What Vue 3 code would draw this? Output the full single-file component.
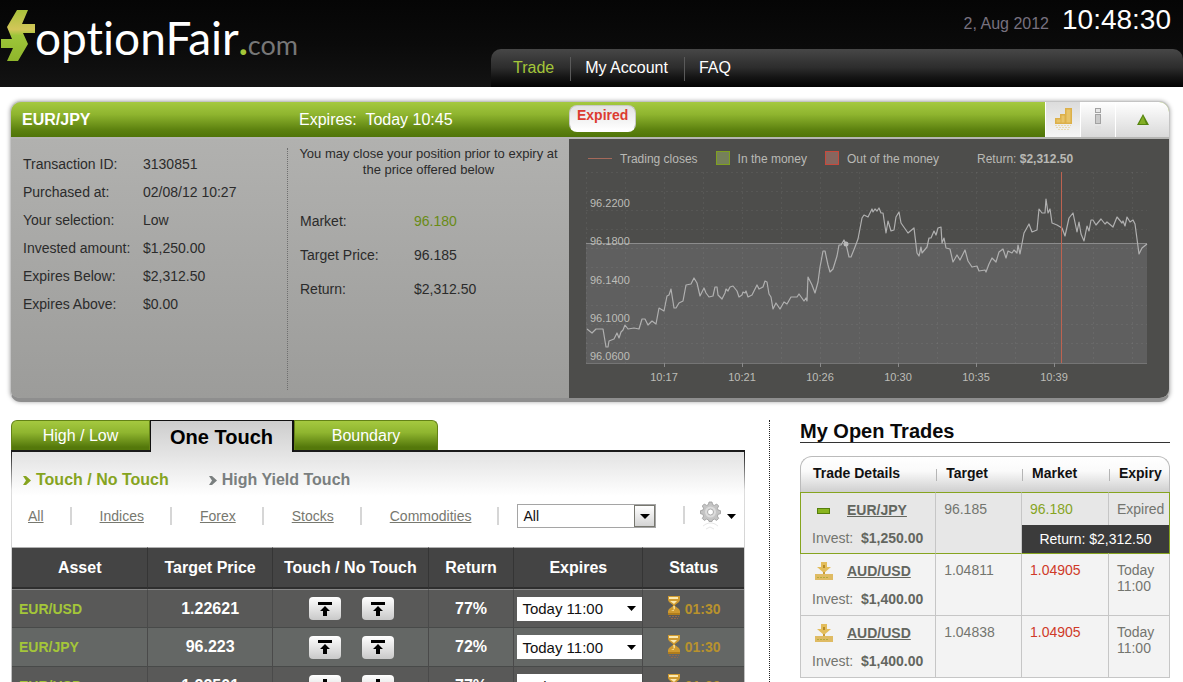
<template>
  <div class="page">
    <header class="top">
      <a class="logo" href="#" aria-label="optionFair.com">
        <svg class="logo-mark" viewBox="0 0 35 53" aria-hidden="true">
          <defs>
            <linearGradient id="markFill" x1="0" y1="0" x2="0" y2="1">
              <stop offset="0" stop-color="#a9c23c" />
              <stop offset="0.38" stop-color="#d3c659" />
              <stop offset="0.5" stop-color="#9dc63a" />
              <stop offset="1" stop-color="#8fb52b" />
            </linearGradient>
          </defs>
          <path d="M17 1H28L22 15H35V24H23L28 35L18 52H7L13 39H1V30H12L7 18Z" fill="url(#markFill)" />
        </svg>
        <span class="logo-name">optionFair</span><span class="logo-dot">.</span><span class="logo-com">com</span>
      </a>
      <div class="top-right">
        <div class="clock">
          <span class="date">2, Aug 2012</span>
          <span class="time">10:48:30</span>
        </div>
        <nav class="menu">
          <a v-for="item in menu" :key="item" href="#" :class="{ active: item === 'Trade' }">{{ item }}</a>
        </nav>
      </div>
    </header>

    <section class="position">
      <div class="position-head">
        <h2>EUR/JPY</h2>
        <p>Expires:&nbsp; Today 10:45</p>
        <div class="position-state">
          <span class="badge">Expired</span>
          <div class="tools">
            <button class="tool pressed" type="button" aria-label="Chart">
              <svg width="18" height="24" viewBox="0 0 18 24">
                <path d="M1 10h5V6h5V0h7v16H1z" fill="#dcb04a" />
                <path d="M2.500 11.500h4v3h-4zM7.500 7.500h3v7h-3zM12.500 1.500h4v13h-4z" fill="#e8c468" />
                <path d="M1 17.500h16M2 19.500h14M4 21.500h11" stroke="#e8dbb0" stroke-dasharray="2 1" />
              </svg>
            </button>
            <button class="tool" type="button" aria-label="Info">
              <svg width="8" height="24" viewBox="0 0 8 24">
                <rect x="1.500" y="0.500" width="5" height="4" fill="#e6e6e6" stroke="#a2a2a2" />
                <rect x="1.500" y="6.500" width="5" height="9" fill="#cacaca" stroke="#a2a2a2" />
                <path d="M1 18h6v5H1z" fill="#e0e0e0" />
              </svg>
            </button>
            <button class="tool wide" type="button" aria-label="Collapse">
              <svg width="12" height="11" viewBox="0 0 12 11"><path d="M6 0l6 11H0z" fill="#55840f" /><path d="M6 2l3 8H2z" fill="#83ae25" /></svg>
            </button>
          </div>
        </div>
      </div>

      <div class="position-body">
        <dl class="details">
          <template v-for="row in details" :key="row[0]">
            <dt>{{ row[0] }}</dt>
            <dd>{{ row[1] }}</dd>
          </template>
        </dl>
        <div class="offer">
          <p>You may close your position prior to expiry at the price offered below</p>
          <dl>
            <dt>Market:</dt>
            <dd class="green">96.180</dd>
            <dt>Target Price:</dt>
            <dd>96.185</dd>
            <dt>Return:</dt>
            <dd>$2,312.50</dd>
          </dl>
        </div>
        <div class="chart">
          <div class="legend">
            <span class="key"><i class="line"></i>Trading closes</span>
            <span class="key"><i class="box in"></i>In the money</span>
            <span class="key"><i class="box out"></i>Out of the money</span>
            <span class="payout">Return: <b>$2,312.50</b></span>
          </div>
          <svg class="plot" viewBox="0 0 600 231" role="img" aria-label="EUR/JPY price">
            <g transform="translate(17 5)">
              <rect x="0" y="71" width="561" height="120" fill="#5f5f5f" />
              <path :d="grid" stroke="#fff" stroke-opacity="0.06" stroke-dasharray="2 3" fill="none" />
              <path d="M0 71.500H561" stroke="#8c8c8c" />
              <path d="M0 191.500H561" stroke="#757575" />
              <path v-for="t in times" :key="t.x" :d="`M${t.x + 0.5} 191v4`" stroke="#8a8a8a" />
              <polyline :points="prices" fill="none" stroke="#b0b0b0" stroke-width="1.200" stroke-linejoin="round" />
              <rect x="475" y="0" width="1" height="191" fill="#bd6350" />
              <circle cx="260" cy="72" r="2.500" fill="#b8b8b8" />
              <text v-for="p in levels" :key="p.y" x="4" :y="p.y">{{ p.label }}</text>
              <text v-for="t in times" :key="t.label" :x="t.x" y="209" text-anchor="middle">{{ t.label }}</text>
            </g>
          </svg>
        </div>
      </div>
    </section>

    <main class="columns">
      <section class="market">
        <div class="tabs">
          <button type="button">High / Low</button>
          <button type="button" class="current">One Touch</button>
          <button type="button">Boundary</button>
        </div>
        <div class="market-panel">
          <div class="modes">
            <a href="#" class="current"><svg width="8" height="9" viewBox="0 0 8 9"><path d="M0 0h3l5 4.500L3 9H0l3-4.500z" fill="currentColor" /></svg>Touch / No Touch</a>
            <a href="#"><svg width="8" height="9" viewBox="0 0 8 9"><path d="M0 0h3l5 4.500L3 9H0l3-4.500z" fill="currentColor" /></svg>High Yield Touch</a>
          </div>
          <div class="filters">
            <a v-for="f in filters" :key="f" href="#">{{ f }}</a>
            <div class="select asset-select">
              <select aria-label="Asset">
                <option>All</option>
              </select>
              <span class="drop"><svg width="10" height="5" viewBox="0 0 10 5"><path d="M0 0h10L5 5z" /></svg></span>
            </div>
            <button class="settings" type="button" aria-label="Settings">
              <svg width="21" height="30" viewBox="0 0 21 30">
                <g fill="#c4c4c4" stroke="#9b9b9b" stroke-width="0.800">
                  <path d="M9 1h3l.6 2.600 1.800.8L16.700 3l2 2-1.300 2.300.8 1.800 2.300.6v3l-2.300.6-.8 1.800 1.300 2.300-2 2-2.300-1.300-1.800.8L12 20.500H9l-.6-1.600-1.800-.8-2.300 1.300-2-2 1.300-2.300-.8-1.800L.5 12.700v-3l2.300-.6.8-1.800L2.300 5l2-2 2.300 1.400 1.800-.8z" />
                  <circle cx="10.500" cy="11" r="5.500" fill="#dcdcdc" stroke="none" />
                  <circle cx="10.500" cy="11" r="3" fill="#fff" />
                </g>
                <path d="M3 25l3-2 3-1h3l3 1 3 2M6 28l4-2 4 2" fill="none" stroke="#e6e6e6" />
              </svg>
              <svg width="9" height="5" viewBox="0 0 9 5"><path d="M0 0h9L4.500 5z" /></svg>
            </button>
          </div>
          <table class="quotes">
            <colgroup>
              <col v-for="n in 6" :key="n" :class="'q' + n" />
            </colgroup>
            <thead>
              <tr>
                <th v-for="h in quoteHeads" :key="h">{{ h }}</th>
              </tr>
            </thead>
            <tbody>
              <tr v-for="q in quotes" :key="q.target">
                <td class="asset">{{ q.asset }}</td>
                <td>{{ q.target }}</td>
                <td>
                  <div class="pair">
                    <button v-for="side in ['Touch', 'No touch']" :key="side" type="button" :aria-label="side">
                      <svg width="14" height="14" viewBox="0 0 14 14">
                        <path v-if="q.up" d="M0 0h14v3H0zM7 4l5 5H9v5H5V9H2z" />
                        <path v-else d="M5 0h4v5h3l-5 5-5-5h3zM0 11h14v3H0z" />
                      </svg>
                    </button>
                  </div>
                </td>
                <td>{{ q.payout }}</td>
                <td class="expires">
                  <div class="select">
                    <select :aria-label="q.asset + ' expiry'">
                      <option>Today 11:00</option>
                    </select>
                    <span class="drop"><svg width="9" height="5" viewBox="0 0 9 5"><path d="M0 0h9L4.500 5z" /></svg></span>
                  </div>
                </td>
                <td>
                  <div class="status">
                    <svg width="14" height="25" viewBox="0 0 14 25">
                      <path d="M1 0h12v4l-1 2-4 3v1l4 3 1 2v4H1v-4l1-2 4-3V9L2 6 1 4z" fill="#cf9a30" />
                      <path d="M2 1h9v2H2zM3 5h7L7 8z" fill="#fbe9b0" />
                      <path d="M6 10h2v3l-4 2h3z" fill="#f6da8a" />
                      <path d="M1 17h12v2H1z" fill="#b07c1c" />
                      <path d="M2 20.500h10M4 22.500h7" stroke="#93684a" stroke-dasharray="2 1" />
                    </svg>
                    01:30
                  </div>
                </td>
              </tr>
            </tbody>
          </table>
        </div>
      </section>

      <aside class="open-trades">
        <h2>My Open Trades</h2>
        <table class="trades">
          <colgroup>
            <col v-for="n in 4" :key="n" :class="'t' + n" />
          </colgroup>
          <thead>
            <tr>
              <th>Trade Details</th>
              <th>Target</th>
              <th>Market</th>
              <th>Expiry</th>
            </tr>
          </thead>
          <tbody>
            <tr v-for="t in trades" :key="t.target" :class="{ selected: t.closed }">
              <td>
                <div class="trade-name">
                  <svg v-if="t.closed" width="18" height="18" viewBox="0 0 18 18">
                    <rect x="2.500" y="7.500" width="12" height="5" fill="#8ab51f" stroke="#557f0c" />
                  </svg>
                  <svg v-else width="18" height="18" viewBox="0 0 18 18">
                    <path d="M6 0h6v5h4l-7 6-7-6h4z" fill="#e3bd5c" />
                    <path d="M8 3h2v3H8z" fill="#b58a25" />
                    <path d="M0 12h18v6H0z" fill="#dfbb63" />
                    <path d="M2 15.500h11" stroke="#b3ab3c" stroke-dasharray="2 1" />
                    <path d="M8 10h2v2H8z" fill="#c89c36" />
                  </svg>
                  <a href="#">{{ t.asset }}</a>
                </div>
                <div class="invest">Invest:&nbsp; <b>{{ t.invest }}</b></div>
              </td>
              <td>{{ t.target }}</td>
              <td :class="t.closed ? 'green' : 'red'">{{ t.market }}</td>
              <td class="last">
                {{ t.expiry }}
                <div v-if="t.closed" class="return">Return: $2,312.50</div>
              </td>
            </tr>
          </tbody>
        </table>
      </aside>
    </main>
  </div>
</template>

<script setup>
const menu = ['Trade', 'My Account', 'FAQ']
const filters = ['All', 'Indices', 'Forex', 'Stocks', 'Commodities']

const details = [
  ['Transaction ID:', '3130851'],
  ['Purchased at:', '02/08/12 10:27'],
  ['Your selection:', 'Low'],
  ['Invested amount:', '$1,250.00'],
  ['Expires Below:', '$2,312.50'],
  ['Expires Above:', '$0.00'],
]

const quoteHeads = ['Asset', 'Target Price', 'Touch / No Touch', 'Return', 'Expires', 'Status']
const quotes = [
  { asset: 'EUR/USD', target: '1.22621', up: true, payout: '77%' },
  { asset: 'EUR/JPY', target: '96.223', up: true, payout: '72%' },
  { asset: 'EUR/USD', target: '1.22501', up: false, payout: '77%' },
]

const trades = [
  { asset: 'EUR/JPY', invest: '$1,250.00', target: '96.185', market: '96.180', expiry: 'Expired', closed: true },
  { asset: 'AUD/USD', invest: '$1,400.00', target: '1.04811', market: '1.04905', expiry: 'Today 11:00' },
  { asset: 'AUD/USD', invest: '$1,400.00', target: '1.04838', market: '1.04905', expiry: 'Today 11:00' },
]

// chart, in plot units
const levels = [
  { label: '96.2200', y: 35 },
  { label: '96.1800', y: 73 },
  { label: '96.1400', y: 112 },
  { label: '96.1000', y: 150 },
  { label: '96.0600', y: 188 },
]
const times = ['10:17', '10:21', '10:26', '10:30', '10:35', '10:39'].map((label, i) => ({ label, x: 78 * (i + 1) }))

const cols = Array.from({ length: 15 }, (_, i) => `M${i * 39 + 0.5} 0V191`)
const rows = Array.from({ length: 10 }, (_, i) => `M0 ${i * 19 + 0.5}H561`)
const grid = [...cols, ...rows].join('')

const prices = `1,157 6,161 10,157 17,157 20,175 22,175 23,169 28,167 31,161 33,166 35,160 37,158 39,153 42,157 48,156
  53,157 56,147 59,147 62,153 66,149 70,152 73,136 78,139 81,124 83,123 85,117 88,136 90,136 93,131 97,129 100,113
  105,112 108,106 111,111 114,124 118,116 120,121 123,125 127,124 129,115 131,115 132,123 136,127 139,121 140,117
  142,119 144,115 147,114 151,119 153,125 156,123 157,120 159,121 160,119 162,125 166,123 171,113 173,117 177,115
  179,109 181,110 183,122 185,125 187,137 190,131 194,137 198,130 201,132 205,125 211,125 213,122 218,129 220,126
  221,129 222,105 226,113 229,121 232,110 234,95 235,90 237,79 239,79 242,93 244,100 247,97 251,84 253,73 255,73
  258,68 260,72 263,85 265,85 269,75 272,67 276,46 278,43 282,45 286,37 287,40 289,37 291,39 293,36 295,41 297,41
  300,61 302,49 305,59 308,58 310,45 313,40 315,51 322,61 328,56 331,81 333,84 335,75 336,81 341,75 343,66 345,66
  348,59 350,63 352,56 355,55 356,71 358,66 360,76 364,77 367,90 371,83 374,88 379,78 382,89 386,95 391,94 393,99
  399,98 400,100 403,92 406,86 410,90 413,80 417,77 420,86 422,79 426,81 428,78 431,81 432,73 434,82 438,61 443,52
  446,60 451,58 453,37 456,41 459,41 460,27 462,41 464,37 466,51 471,53 476,56 479,64 483,46 487,41 491,60 493,50
  495,62 498,69 501,54 503,59 505,48 507,48 510,53 515,47 519,52 521,50 527,55 531,45 536,51 537,49 539,54 541,45
  544,50 547,48 549,52 553,82 556,76 561,72`
</script>

<style>
html {
  scrollbar-width: none;
}

body {
  background: #fff;
}
</style>

<style scoped>
.page {
  font-family: "Liberation Sans", Arial, sans-serif;
  font-size: 14px;
  line-height: 16px;
  color: #2b2b2b;
}

h2,
p,
dl,
dd {
  margin: 0;
}

button {
  font: inherit;
  border: 0;
  padding: 0;
  cursor: pointer;
}

a {
  color: inherit;
}

/* header */
.top {
  display: flex;
  justify-content: space-between;
  height: 87px;
  background: linear-gradient(#050505, #0a0a0a 50%, #131313);
}

.logo {
  display: flex;
  align-items: baseline;
  font-family: Lato, sans-serif;
  font-variant-ligatures: none;
  line-height: 75px;
  text-decoration: none;
}

.logo-mark {
  width: 35px;
  height: 53px;
  align-self: flex-start;
  margin-top: 9px;
}

.logo-name {
  font-size: 46px;
  color: #fff;
}

.logo-dot {
  font-size: 38px;
  font-weight: 700;
  color: #a4c639;
}

.logo-com {
  font-size: 27px;
  color: #777;
}

.top-right {
  display: flex;
  flex-direction: column;
  justify-content: space-between;
  width: 692px;
}

.clock {
  display: flex;
  justify-content: flex-end;
  align-items: baseline;
  gap: 13px;
  padding: 4px 12px 0 0;
  line-height: 32px;
}

.date {
  font-size: 16px;
  color: #77717f;
}

.time {
  font-size: 28px;
  color: #fff;
}

.menu {
  display: flex;
  height: 38px;
  padding-left: 8px;
  border-radius: 10px 10px 0 0;
  background: linear-gradient(#474747, #2c2c2c 50%, #141414 75%, #030303);
}

.menu a {
  margin-top: 8px;
  height: 24px;
  padding: 0 16px 0 14px;
  font-size: 16px;
  line-height: 21px;
  color: #fff;
  text-decoration: none;
}

.menu a + a {
  border-left: 1px solid #5a5a5a;
}

.menu .active {
  color: #a4c639;
}

/* position panel */
.position {
  margin: 14px 13px 0 10px;
  border: 1px solid #c4c4c4;
  border-bottom: 4px solid #8e8e8e;
  border-radius: 11px;
  background: #b2b2b0;
  box-shadow: 0 0 4px rgba(0, 0, 0, 0.35);
  overflow: hidden;
}

.position-head,
.position-body {
  display: grid;
  grid-template-columns: 277fr 281fr 600fr;
}

.position-head {
  height: 35px;
  background: linear-gradient(#a5c940, #8fb52f 35%, #5c810f 80%, #4f7408);
  color: #fff;
  font-size: 16px;
  line-height: 35px;
  border-bottom: 2px solid #b5b5b3;
}

.position-head h2 {
  padding-left: 11px;
  font-size: 16px;
}

.position-head p {
  padding-left: 11px;
}

.position-state {
  display: flex;
  justify-content: space-between;
}

.badge {
  margin-top: 3px;
  height: 24px;
  padding: 0 7px;
  border: 1px solid #c9c9c9;
  border-bottom: 2px solid #fff;
  border-radius: 8px;
  background: linear-gradient(#e2e2e2, #fff);
  color: #dc3b30;
  font-size: 14px;
  font-weight: 700;
  line-height: 19px;
}

.tools {
  display: flex;
}

.tool {
  display: flex;
  align-items: center;
  justify-content: center;
  width: 35px;
  border-left: 1px solid #fff;
  background: linear-gradient(#fff, #d9d9d9);
}

.tool.pressed {
  background: linear-gradient(#dcdcdc, #f6f6f6);
}

.tool.wide {
  width: 54px;
}

.position-body {
  background: linear-gradient(#b1b1af, #9c9c9a);
}

.details {
  display: grid;
  grid-template-columns: 120px 1fr;
  align-content: start;
  margin: 9px 0 8px;
  padding: 2px 0 0 12px;
  line-height: 28px;
  border-right: 1px dotted #6f6f6f;
}

.offer {
  padding-top: 7px;
}

.offer p {
  padding: 0 8px;
  font-size: 13px;
  text-align: center;
}

.offer dl {
  display: grid;
  grid-template-columns: 114px 1fr;
  margin-top: 26px;
  padding-left: 12px;
  line-height: 34px;
}

.green {
  color: #7f9e22;
}

.offer .green {
  color: #698b16;
}

.red {
  color: #cf3a28;
}

.chart {
  background: #4d4d4b;
  border-radius: 0 0 9px 0;
}

.legend {
  display: flex;
  padding: 12px 0 0 19px;
  height: 16px;
  font-size: 12px;
  color: #b9b9b5;
}

.key {
  display: flex;
  margin-right: 18px;
}

.key i {
  margin-right: 8px;
}

.line {
  width: 24px;
  height: 1px;
  margin-top: 7px;
  background: #a5695a;
}

.box {
  width: 12px;
  height: 12px;
}

.in {
  border: 1px solid #7fa01f;
  background: #75805a;
}

.out {
  border: 1px solid #c8493c;
  background: #86665f;
}

.payout {
  margin-left: 20px;
}

.plot {
  display: block;
  width: 100%;
}

.plot text {
  fill: #bdbdb8;
  font-size: 11px;
}

/* lower columns */
.columns {
  display: grid;
  grid-template-columns: 758fr 401fr;
  margin: 18px 13px 0 11px;
}

.market {
  padding-right: 24px;
}

.tabs {
  display: flex;
}

.tabs button {
  width: 144px;
  height: 30px;
  border: 1px solid #638216;
  border-bottom: 0;
  background: linear-gradient(#a5c940, #8fb52f 40%, #54780b 90%);
  color: #fff;
  font-size: 16px;
  line-height: 30px;
}

.tabs button:first-child {
  width: 139px;
  border-radius: 6px 0 0 0;
}

.tabs button:last-child {
  border-radius: 0 6px 0 0;
}

.tabs .current {
  height: 32px;
  margin-bottom: -2px;
  border: solid #111;
  border-width: 1px 2px 0 1px;
  background: linear-gradient(#cdcdcd, #e2e2e2);
  color: #000;
  font-size: 20px;
  font-weight: 700;
  z-index: 1;
}

.market-panel {
  border: solid;
  border-width: 2px 1px 0;
  border-image: linear-gradient(#1a1a1a, #1a1a1a 2px, #ddd 40px, #bbb) 2 1 0;
  background: linear-gradient(#e2e2e2, #fff 44px);
}

.modes {
  display: flex;
  gap: 40px;
  padding: 18px 0 0 11px;
  font-size: 16px;
  font-weight: 700;
  line-height: 20px;
  color: #7a7f7f;
}

.modes a {
  text-decoration: none;
}

.modes svg {
  margin-right: 5px;
}

.modes .current {
  color: #86a41f;
}

.filters {
  display: flex;
  align-items: center;
  height: 28px;
  padding: 12px 8px 17px 16px;
  color: #77786f;
}

.filters a {
  position: relative;
  margin-right: 56px;
}

.filters a::after,
.settings::before {
  content: "";
  position: absolute;
  right: -28px;
  top: -1px;
  width: 2px;
  height: 18px;
  background: #d6d6d6;
}

.filters a:nth-of-type(5) {
  margin-right: 46px;
}

.select {
  position: relative;
  display: flex;
}

.select select {
  appearance: none;
  width: 100%;
  height: 24px;
  padding: 0 5px;
  border: 1px solid #a5a5a5;
  border-radius: 0;
  background: #fff;
  color: #111;
  font-family: inherit;
  font-size: 14px;
}

.drop {
  position: absolute;
  top: 0;
  right: 6px;
  bottom: 0;
  display: flex;
  align-items: center;
  pointer-events: none;
}

.asset-select {
  flex: 1;
}

.asset-select .drop {
  top: 1px;
  right: 1px;
  bottom: 1px;
  width: 19px;
  justify-content: center;
  border: 1px solid #77776f;
  background: linear-gradient(#fff, #d4d4d4);
}

.settings {
  position: relative;
  display: flex;
  align-items: center;
  gap: 6px;
  margin-left: 44px;
  background: none;
}

.settings::before {
  left: -17px;
  right: auto;
  top: 5px;
}

/* quotes table */
.quotes {
  width: 100%;
  table-layout: fixed;
  border-collapse: separate;
  border-spacing: 0;
  color: #fff;
  font-size: 16px;
  font-weight: 700;
}

.q1 { width: 18.500%; }
.q2 { width: 17%; }
.q3 { width: 21.300%; }
.q4 { width: 11.700%; }
.q5 { width: 17.600%; }
.q6 { width: 13.900%; }

.quotes th {
  height: 39px;
  padding: 0;
  border-top: 1px solid #b0b0b0;
  border-bottom: 2px solid #2e2e2e;
  background: #444;
}

.quotes th + th {
  border-left: 1px solid #353535;
}

.quotes td {
  height: 38px;
  padding: 0;
  border-bottom: 1px solid #484a49;
  background: #595958;
  text-align: center;
}

.quotes td + td {
  border-left: 1px solid #4a4a4a;
}

.quotes tbody tr:first-child td {
  height: 37px;
  border-top: 1px solid #868686;
}

.quotes tr:nth-child(even) td {
  background: #646765;
}

.quotes .asset {
  padding-left: 7px;
  color: #a4c639;
  font-size: 14px;
  text-align: left;
}

.pair {
  display: flex;
  justify-content: center;
  gap: 21px;
  padding-left: 3px;
}

.pair button {
  display: flex;
  align-items: center;
  justify-content: center;
  width: 32px;
  height: 23px;
  border-radius: 4px;
  background: linear-gradient(#fff, #c9c9c9);
}

.quotes .expires {
  padding-left: 3px;
}

.expires select {
  border: 0;
  font-size: 15px;
}

.status {
  display: flex;
  align-items: center;
  justify-content: center;
  gap: 4px;
  color: #b8922d;
  font-size: 14px;
}

/* open trades */
.open-trades {
  padding-left: 30px;
  border-left: 1px dotted #222;
}

.open-trades h2 {
  border-bottom: 1px solid #333;
  color: #0a0a0a;
  font-size: 20px;
  line-height: 22px;
}

.trades {
  width: 100%;
  margin-top: 13px;
  table-layout: fixed;
  border-collapse: separate;
  border-spacing: 0;
  color: #73756f;
}

.t1 { width: 36.800%; }
.t2 { width: 23.200%; }
.t3 { width: 23.500%; }
.t4 { width: 16.500%; }

.trades th {
  position: relative;
  height: 31px;
  padding: 0 0 4px 10px;
  border-top: 1px solid #bbb;
  background: linear-gradient(#fff, #fafafa 40%, #cfcfcf);
  color: #111;
  text-align: left;
}

.trades th + th::before {
  content: "";
  position: absolute;
  left: 0;
  top: 12px;
  width: 1px;
  height: 12px;
  background: #b5b5b5;
}

.trades th:first-child {
  padding-left: 12px;
  border-left: 1px solid #bbb;
  border-radius: 12px 0 0 0;
}

.trades th:last-child {
  border-right: 1px solid #bbb;
  border-radius: 0 12px 0 0;
}

.trades td {
  height: 45px;
  padding: 8px 0 8px 8px;
  border-right: 1px solid #c6c6c6;
  border-bottom: 1px solid #c6c6c6;
  background: #f3f3f3;
  vertical-align: top;
}

.trades td:first-child {
  padding-left: 11px;
  border-left: 1px solid #c6c6c6;
}

.trades .selected td {
  padding-bottom: 7px;
  border-top: 1px solid #86a41f;
  border-bottom-color: #86a41f;
  background: #e7e7e7;
}

.trades .selected td:first-child {
  border-left-color: #86a41f;
}

.trades .selected td:last-child {
  border-right-color: #86a41f;
}

.trades .green {
  color: #86a41f;
}

.last {
  position: relative;
}

.return {
  position: absolute;
  right: 0;
  bottom: 0;
  width: 147px;
  background: #3b3b3b;
  color: #fff;
  line-height: 28px;
  text-align: center;
}

.trade-name {
  display: flex;
  gap: 14px;
  padding-left: 3px;
  font-weight: 700;
  line-height: 18px;
}

.trade-name a {
  color: #63665f;
}

.invest {
  margin-top: 11px;
}

.invest b {
  color: #63665f;
}
</style>
